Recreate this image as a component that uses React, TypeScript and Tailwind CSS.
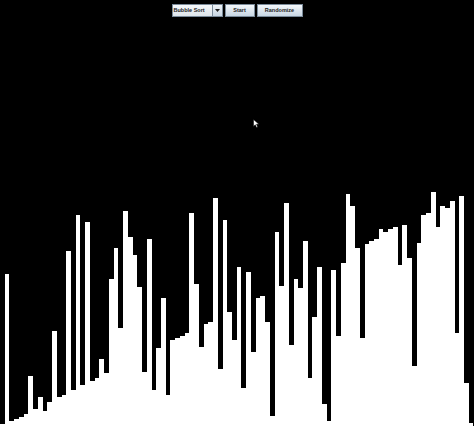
import React from "react"

// top edge (y) of each bar, read off the picture; height = 426 - top
const tops = [
  424, 274, 421, 419, 417, 414, 376, 409, 397, 411, 402, 331, 397, 395, 251, 390, 215, 385, 222, 381,
  378, 359, 373, 279, 248, 328, 211, 237, 255, 287, 372, 239, 390, 348, 298, 395, 340, 338, 336, 333,
  213, 284, 347, 324, 322, 198, 369, 220, 312, 340, 267, 388, 272, 352, 298, 296, 322, 416, 232, 286,
  203, 345, 279, 288, 241, 378, 317, 267, 404, 421, 270, 336, 263, 194, 206, 248, 338, 244, 241, 239,
  229, 232, 229, 227, 265, 225, 258, 366, 243, 215, 213, 192, 227, 206, 208, 201, 333, 196, 383, 423,
]

const font = { fontFamily: '"Liberation Sans", Arial, sans-serif' }

function Button({ label, width }: { label: string; width: string }) {
  return (
    <button
      className={`${width} h-[13px] flex items-center justify-center border border-[#7a8a99] bg-gradient-to-b from-[#f4f7fa] to-[#c9d7e4] text-[5.5px] font-bold leading-none text-[#222]`}
      style={font}
    >
      {label}
    </button>
  )
}

export default function App() {
  return (
    <div className="relative flex h-[426px] w-[474px] flex-col overflow-hidden bg-black">
      <div className="flex justify-center gap-[2px] pt-[4px]">
        <div className="flex h-[13px] w-[51px] border border-[#7a8a99] bg-gradient-to-b from-[#f6f8fa] to-[#dfe6ec]">
          <div
            className="flex flex-1 items-center pl-[1px] text-[5.5px] font-bold leading-none text-[#222]"
            style={font}
          >
            Bubble Sort
          </div>
          <div className="flex w-[10px] items-center justify-center border-l border-[#7a8a99] bg-gradient-to-b from-[#eef2f6] to-[#c9d7e4]">
            <svg width="5" height="3" viewBox="0 0 5 3">
              <path d="M0 0H5L2.5 3Z" fill="#222" />
            </svg>
          </div>
        </div>
        <Button label="Start" width="w-[30px]" />
        <Button label="Randomize" width="w-[46px]" />
      </div>

      <div className="flex flex-1 items-end">
        {tops.map((t, i) => (
          <div key={i} className="flex-1 bg-white" style={{ height: 426 - t }} />
        ))}
      </div>

      <svg className="absolute left-[253px] top-[119px]" width="6" height="9" viewBox="0 0 12 18">
        <path d="M1 1V15L4.5 11.5L7 17L9.5 16L7 10.5H12Z" fill="#fff" stroke="#000" strokeWidth="1" />
      </svg>
    </div>
  )
}
